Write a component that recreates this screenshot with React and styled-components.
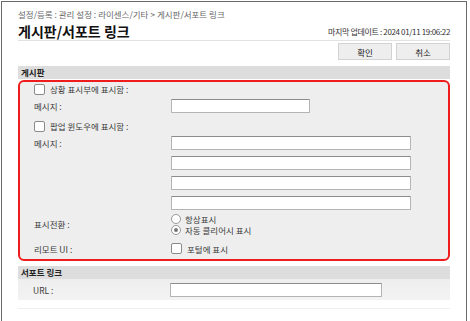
import React from 'react';
import styled, { createGlobalStyle } from 'styled-components';

const Global = createGlobalStyle`
  body {
    margin: 0;
    background: #fff;
    font-family: "Noto Sans CJK KR", "Noto Sans", sans-serif;
    color: #222;
  }
`

const Frame = styled.div`
  margin: 1px 0 0 1px;
  width: 432px;
  height: 340px;
  padding: 0 16px;
  border: 1px solid #6a6a6a;
  border-bottom: none;
  background: #fff;
`

const Crumb = styled.div`
  padding-top: 5px;
  height: 14px;
  font-size: 8.5px;
  line-height: 14px;
  color: #666;
`

const TitleRow = styled.div`
  display: flex;
  align-items: flex-end;
  justify-content: space-between;
  height: 19px;
  border-bottom: 1px solid #e2e2e2;
`

const Title = styled.h1`
  margin: 0;
  font-size: 14px;
  line-height: 18px;
  font-weight: 700;
  color: #111;
`

const Updated = styled.span`
  font-size: 8px;
  line-height: 16px;
  letter-spacing: -0.35px;
  color: #333;
`

const Buttons = styled.div`
  display: flex;
  justify-content: flex-end;
  gap: 4px;
  padding-top: 2px;
  height: 21px;
`

const Btn = styled.button`
  width: 54px;
  height: 17px;
  padding: 0;
  margin: 0;
  background: #eeeeee;
  border: 1px solid #d2d2d2;
  font-family: inherit;
  font-size: 8.5px;
  color: #222;
`

const SectionHead = styled.div`
  margin-top: ${p => p.$top || 0}px;
  height: 13px;
  padding-left: 3px;
  background: #dddddd;
  font-size: 8.5px;
  font-weight: 700;
  line-height: 13px;
  color: #222;
`

const Highlight = styled.div`
  margin-top: 1px;
  padding: 0 0 3px 14px;
  border: 2px solid #ee1c1c;
  border-radius: 6px;
  background: #eeeeee;
`

const Plain = styled.div`
  padding: 4px 0 3px 15px;
  background: linear-gradient(#eeeeee, #f3f3f3);
`

const Row = styled.div`
  display: grid;
  grid-template-columns: 137px 1fr;
  align-items: ${p => p.$align || 'center'};
  min-height: ${p => p.$h || 16}px;
  margin-top: ${p => p.$top || 0}px;
`

const Label = styled.label`
  display: flex;
  align-items: center;
  gap: 5px;
  font-size: 8.5px;
  line-height: 14px;
  color: #3a3a3a;
  white-space: nowrap;
`

const Box = styled.span`
  width: 9px;
  height: 9px;
  border: 1px solid #8a8a8a;
  border-radius: 2px;
  background: #fff;
  flex: none;
`

const Field = styled.div`
  width: ${p => p.$w}px;
  height: 12px;
  border: 1px solid #b4b4b4;
  border-top-color: #8c8c8c;
  border-radius: 1px;
  background: #fff;
`

const Stack = styled.div`
  display: flex;
  flex-direction: column;
  gap: ${p => p.$gap || 0}px;
`

const Radio = styled.span`
  position: relative;
  width: 8px;
  height: 8px;
  border: 1px solid #9a9a9a;
  border-radius: 50%;
  background: #fff;
  flex: none;
  &::after {
    content: '';
    display: ${p => (p.$on ? 'block' : 'none')};
    position: absolute;
    left: 2px;
    top: 2px;
    width: 4px;
    height: 4px;
    border-radius: 50%;
    background: #777;
  }
`

const Option = styled.div`
  display: flex;
  align-items: center;
  gap: 4px;
  height: 11px;
  font-size: 8.5px;
  color: #3a3a3a;
`

const Footer = styled.div`
  margin-top: 8px;
  padding: 4px 0 0 3px;
  border-top: 1px solid #eeeeee;
`

const ToTop = () => (
  <svg width="10" height="8" viewBox="0 0 10 8">
    <rect x="0" y="0" width="10" height="1" fill="#c8c8c8" />
    <path d="M5 2 L9.5 7.5 L0.5 7.5 Z" fill="#d0d0d0" />
  </svg>
)

export default function App() {
  return (
    <>
      <Global />
      <Frame>
        <Crumb>설정/등록 : 관리 설정 : 라이센스/기타 &gt; 게시판/서포트 링크</Crumb>
        <TitleRow>
          <Title>게시판/서포트 링크</Title>
          <Updated>마지막 업데이트 : 2024 01/11 19:06:22</Updated>
        </TitleRow>
        <Buttons>
          <Btn>확인</Btn>
          <Btn>취소</Btn>
        </Buttons>

        <SectionHead $top={2}>게시판</SectionHead>
        <Highlight>
          <Row $h={14}>
            <Label><Box />상황 표시부에 표시함 :</Label>
          </Row>
          <Row $h={17} $top={1}>
            <Label>메시지 :</Label>
            <Field $w={137} />
          </Row>
          <Row $h={16} $top={4}>
            <Label><Box />팝업 윈도우에 표시함 :</Label>
          </Row>
          <Row $align="start" $top={2}>
            <Label>메시지 :</Label>
            <Stack $gap={6}>
              <Field $w={238} />
              <Field $w={238} />
              <Field $w={238} />
              <Field $w={238} />
            </Stack>
          </Row>
          <Row $top={2} $h={24}>
            <Label>표시전환 :</Label>
            <Stack>
              <Option><Radio />항상표시</Option>
              <Option><Radio $on />자동 클리어시 표시</Option>
            </Stack>
          </Row>
          <Row $top={5} $h={15}>
            <Label>리모트 UI :</Label>
            <Label><Box />포털에 표시</Label>
          </Row>
        </Highlight>

        <SectionHead $top={5}>서포트 링크</SectionHead>
        <Plain>
          <Row $h={14}>
            <Label>URL :</Label>
            <Field $w={210} />
          </Row>
        </Plain>
        <Footer>
          <ToTop />
        </Footer>
      </Frame>
    </>
  )
}
